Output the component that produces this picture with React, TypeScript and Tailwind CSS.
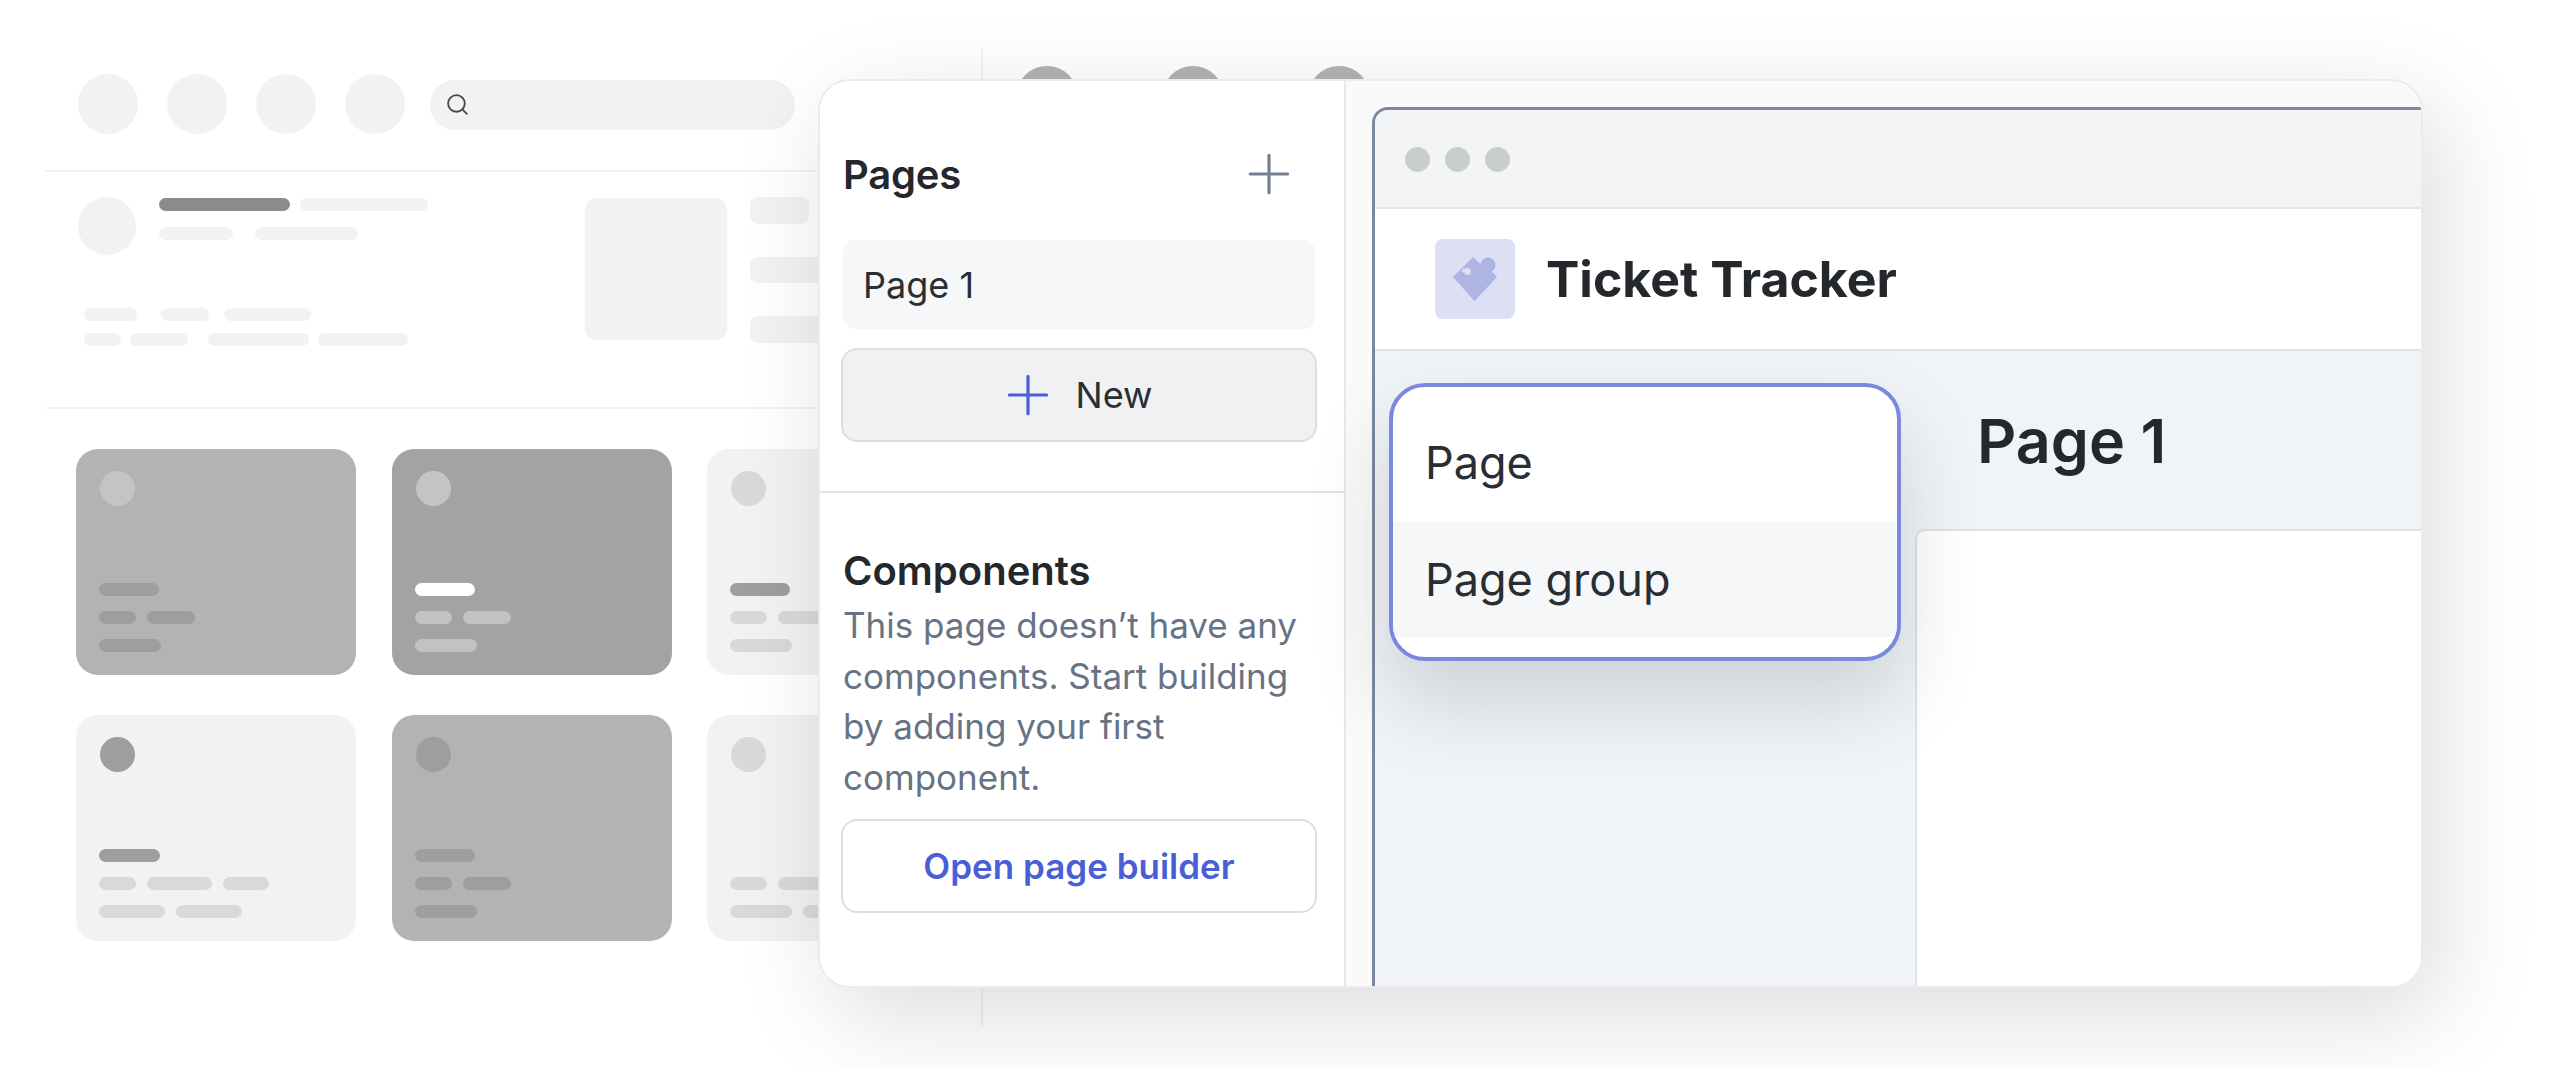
import { Plus, Search } from 'lucide-react'

type CardProps = {
  bg: string
  dot: string
  rows: string[][]
}

// each row is a list of pill classes, first row is always the title pill
function Card({ bg, dot, rows }: CardProps) {
  return (
    <div className={`h-[226px] w-[280px] shrink-0 rounded-[22px] pl-[23px] pt-[22px] ${bg}`}>
      <div className={`ml-[1px] h-[35px] w-[35px] rounded-full ${dot}`} />
      <div className="mt-[77px] flex flex-col gap-[15px]">
        {rows.map((row, index) => (
          <div key={index} className="flex gap-[11px]">
            {row.map((pill, pillIndex) => (
              <div key={pillIndex} className={`h-[13px] rounded-full ${pill}`} />
            ))}
          </div>
        ))}
      </div>
    </div>
  )
}

const cardRows = [
  [
    {
      bg: 'bg-[#b3b3b3]',
      dot: 'bg-[#c4c4c4]',
      rows: [
        ['w-[60px] bg-[#9e9e9e]'],
        ['w-[37px] bg-[#9e9e9e]', 'w-[48px] bg-[#9e9e9e]'],
        ['w-[62px] bg-[#9e9e9e]'],
      ],
    },
    {
      bg: 'bg-[#a3a3a3]',
      dot: 'bg-[#c4c4c4]',
      rows: [
        ['w-[60px] bg-white'],
        ['w-[37px] bg-[#c2c2c2]', 'w-[48px] bg-[#c2c2c2]'],
        ['w-[62px] bg-[#c2c2c2]'],
      ],
    },
    {
      bg: 'bg-[#f2f2f2]',
      dot: 'bg-[#d9d9d9]',
      rows: [
        ['w-[60px] bg-[#9e9e9e]'],
        ['w-[37px] bg-[#d9d9d9]', 'w-[48px] bg-[#d9d9d9]'],
        ['w-[62px] bg-[#d9d9d9]'],
      ],
    },
  ],
  [
    {
      bg: 'bg-[#f2f2f2]',
      dot: 'bg-[#9e9e9e]',
      rows: [
        ['w-[61px] bg-[#9e9e9e]'],
        ['w-[37px] bg-[#d9d9d9]', 'w-[65px] bg-[#d9d9d9]', 'w-[46px] bg-[#d9d9d9]'],
        ['w-[66px] bg-[#d9d9d9]', 'w-[66px] bg-[#d9d9d9]'],
      ],
    },
    {
      bg: 'bg-[#b3b3b3]',
      dot: 'bg-[#9e9e9e]',
      rows: [
        ['w-[60px] bg-[#9e9e9e]'],
        ['w-[37px] bg-[#9e9e9e]', 'w-[48px] bg-[#9e9e9e]'],
        ['w-[62px] bg-[#9e9e9e]'],
      ],
    },
    {
      bg: 'bg-[#f2f2f2]',
      dot: 'bg-[#d9d9d9]',
      rows: [
        ['w-[60px] bg-[#f2f2f2]'],
        ['w-[37px] bg-[#d9d9d9]', 'w-[65px] bg-[#d9d9d9]'],
        ['w-[62px] bg-[#d9d9d9]', 'w-[66px] bg-[#d9d9d9]'],
      ],
    },
  ],
]

function Pill({ className }: { className: string }) {
  return <div className={`h-[13px] rounded-full ${className}`} />
}

function Wireframe() {
  return (
    <div className="flex h-full">
      <div className="mt-[47px] h-[979px] w-[938px] shrink-0 border-r-2 border-[#f3f3f3]">
        {/* top bar */}
        <div className="flex h-[125px] items-start gap-[29px] border-b-2 border-[#f3f3f3] pl-[33px] pt-[27px]">
          <div className="h-[60px] w-[60px] rounded-full bg-[#f2f2f2]" />
          <div className="h-[60px] w-[60px] rounded-full bg-[#f2f2f2]" />
          <div className="h-[60px] w-[60px] rounded-full bg-[#f2f2f2]" />
          <div className="h-[60px] w-[60px] rounded-full bg-[#f2f2f2]" />
          <div className="-ml-[4px] mt-[6px] flex h-[50px] w-[365px] items-center rounded-full bg-[#f2f2f2] pl-[15px]">
            <Search size={25} strokeWidth={1.8} className="-mt-[1px] text-[#4a4a4a]" />
          </div>
        </div>
        {/* profile strip */}
        <div className="flex h-[237px] border-b-2 border-[#f3f3f3] pl-[33px] pt-[25px]">
          <div className="w-[507px] shrink-0">
            <div className="flex gap-[23px]">
              <div className="h-[58px] w-[58px] rounded-full bg-[#f2f2f2]" />
              <div className="pt-[1px]">
                <div className="flex gap-[10px]">
                  <Pill className="w-[131px] bg-[#8c8c8c]" />
                  <Pill className="w-[128px] bg-[#f2f2f2]" />
                </div>
                <div className="mt-[16px] flex gap-[22px]">
                  <Pill className="w-[74px] bg-[#f2f2f2]" />
                  <Pill className="w-[103px] bg-[#f2f2f2]" />
                </div>
              </div>
            </div>
            <div className="mt-[53px] flex gap-[24px] pl-[6px]">
              <Pill className="w-[53px] bg-[#f2f2f2]" />
              <div className="flex gap-[15px]">
                <Pill className="w-[48px] bg-[#f2f2f2]" />
                <Pill className="w-[87px] bg-[#f2f2f2]" />
              </div>
            </div>
            <div className="mt-[12px] flex gap-[9px] pl-[6px]">
              <Pill className="w-[37px] bg-[#f2f2f2]" />
              <Pill className="w-[58px] bg-[#f2f2f2]" />
              <Pill className="ml-[11px] w-[101px] bg-[#f2f2f2]" />
              <Pill className="w-[90px] bg-[#f2f2f2]" />
            </div>
          </div>
          <div className="mt-[1px] h-[142px] w-[142px] shrink-0 rounded-[12px] bg-[#f2f2f2]" />
          <div className="ml-[23px] flex flex-col gap-[33px]">
            <div className="h-[27px] w-[59px] rounded-[8px] bg-[#f2f2f2]" />
            <div className="h-[26px] w-[120px] rounded-[8px] bg-[#f2f2f2]" />
            <div className="h-[27px] w-[120px] rounded-[8px] bg-[#f2f2f2]" />
          </div>
        </div>
        {/* card grid */}
        <div className="flex flex-col gap-[40px] pl-[31px] pt-[40px]">
          {cardRows.map((row, index) => (
            <div key={index} className="flex gap-[35.5px]">
              {row.map((card, cardIndex) => (
                <Card key={cardIndex} {...card} />
              ))}
            </div>
          ))}
        </div>
      </div>
      {/* second column, only its top shows above the panel */}
      <div className="flex gap-[84px] pl-[33px] pt-[66px]">
        <div className="h-[62px] w-[62px] rounded-full bg-[#b3b3b3]" />
        <div className="h-[62px] w-[62px] rounded-full bg-[#b3b3b3]" />
        <div className="h-[62px] w-[62px] rounded-full bg-[#b3b3b3]" />
      </div>
    </div>
  )
}

function PuzzleIcon() {
  return (
    <svg width="44" height="44" viewBox="0 0 44 44" fill="none">
      <path
        d="M20 1 L27 7.5 L37 14 L43 20 L21.5 43 L1 20 Z"
        fill="#aeb5e3"
        stroke="#aeb5e3"
        strokeWidth="1.5"
        strokeLinejoin="round"
      />
      <circle cx="35" cy="8" r="7.5" fill="#aeb5e3" />
      <circle cx="14.5" cy="14.5" r="3.4" fill="#dde0f5" />
      <path d="M9 15 L12 12" stroke="#dde0f5" strokeWidth="2.5" />
    </svg>
  )
}

function Sidebar() {
  return (
    <div className="w-[526px] shrink-0 border-r-2 border-[#e6e8ea] bg-white">
      <div className="pl-[21px] pr-[27px]">
        <div className="mb-[40px] mt-[67px] flex h-[52px] items-center justify-between pl-[2px] pr-[16px]">
          <span className="pt-[2px] text-[40px] leading-[52px] font-semibold tracking-[-0.2px] text-[#24282c]">Pages</span>
          <Plus size={64} strokeWidth={1.2} className="-my-[6px] text-[#748092]" />
        </div>
        <div className="mx-[2px] flex h-[89px] items-center rounded-[12px] bg-[#f5f7f9] pl-[20px] text-[36px] text-[#2a2e33]">
          Page 1
        </div>
        <button
          type="button"
          className="mt-[19px] flex h-[94px] w-full items-center justify-center gap-[16px] rounded-[16px] border-2 border-[#dcdfe1] bg-[#eff1f3] text-[36px] text-[#2a2e33]"
        >
          <Plus size={64} strokeWidth={1.2} className="-ml-[10px] text-[#4d5fd6]" />
          New
        </button>
      </div>
      <div className="mt-[49px] h-[2px] bg-[#e1e4e6]" />
      <div className="pl-[21px] pr-[27px]">
        <h3 className="mt-[55px] pl-[2px] text-[40px] leading-[46px] font-semibold text-[#24282c]">Components</h3>
        <p className="mt-[6px] pl-[2px] text-[35px] leading-[50.5px] text-[#677384]">
          This page doesn’t have any components. Start building by adding your first component.
        </p>
        <button
          type="button"
          className="mt-[17px] h-[94px] w-full rounded-[16px] border-2 border-[#dcdfe1] bg-white text-[35px] font-semibold text-[#4a5fd5]"
        >
          Open page builder
        </button>
      </div>
    </div>
  )
}

function BrowserFrame() {
  return (
    <div className="relative flex-1 bg-[#fafafa] pl-[26px] pt-[26px]">
      <div className="flex h-full flex-col overflow-hidden rounded-tl-[16px] border-l-[3px] border-t-[3px] border-[#7b889e]">
        <div className="flex h-[99px] shrink-0 items-center gap-[15px] border-b-2 border-[#e3e5e7] bg-[#f2f4f5] pl-[30px] pt-[1px]">
          <div className="h-[25px] w-[25px] rounded-full bg-[#c9cdce]" />
          <div className="h-[25px] w-[25px] rounded-full bg-[#c9cdce]" />
          <div className="h-[25px] w-[25px] rounded-full bg-[#c9cdce]" />
        </div>
        <div className="flex h-[142px] shrink-0 items-center gap-[31px] border-b-2 border-[#e3e5e7] bg-white pl-[60px]">
          <div className="flex h-[80px] w-[80px] items-center justify-center rounded-[8px] bg-[#dde0f5]">
            <PuzzleIcon />
          </div>
          <span className="text-[50px] font-bold text-[#24282c]">Ticket Tracker</span>
        </div>
        <div className="flex min-h-0 flex-1 flex-col bg-[#f0f4f8]">
          <div className="flex h-[178px] shrink-0 items-center pl-[602px] pt-[4px]">
            <span className="text-[61px] font-semibold text-[#24282c]">Page 1</span>
          </div>
          <div className="ml-[540px] flex-1 rounded-tl-[10px] border-l-2 border-t-2 border-[#dfe2e5] bg-white" />
        </div>
      </div>
      {/* dropdown sits over the page header */}
      <div className="absolute left-[43px] top-[302px] h-[278px] w-[512px] overflow-hidden rounded-[36px] border-[4px] border-[#7a88de] bg-white shadow-[0_40px_80px_rgba(20,30,50,0.16)]">
        <div className="flex h-[135px] items-center pl-[32px] pt-[17px] text-[45px] text-[#2a2e33]">Page</div>
        <div className="flex h-[115px] items-center bg-[#f5f7f9] pl-[32px] text-[45px] text-[#2a2e33]">
          Page group
        </div>
      </div>
    </div>
  )
}

export default function App() {
  return (
    <div className="relative h-[1067px] w-[2560px] overflow-hidden bg-white font-['Inter',sans-serif]">
      <div className="ml-[45px] h-full">
        <Wireframe />
      </div>
      <div className="absolute left-[818px] top-[79px] flex h-[909px] w-[1605px] overflow-hidden rounded-[32px] border-2 border-[#ebebeb] shadow-[16px_28px_100px_rgba(0,0,0,0.14)]">
        <Sidebar />
        <BrowserFrame />
      </div>
    </div>
  )
}
